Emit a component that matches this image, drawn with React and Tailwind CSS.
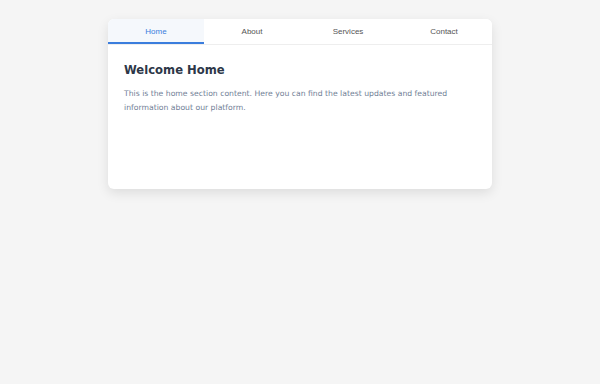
import React, { useState } from "react";

const tabs = [
  {
    id: "home",
    label: "Home",
    title: "Welcome Home",
    body: "This is the home section content. Here you can find the latest updates and featured information about our platform.",
  },
  {
    id: "about",
    label: "About",
    title: "About Us",
    body: "Learn more about our team, our mission and the story behind the platform.",
  },
  {
    id: "services",
    label: "Services",
    title: "Our Services",
    body: "Explore the services we offer and find the one that fits your needs.",
  },
  {
    id: "contact",
    label: "Contact",
    title: "Get in Touch",
    body: "Have a question? Reach out to us and we will get back to you shortly.",
  },
];

const App = () => {
  const [active, setActive] = useState("home");
  const current = tabs.find((t) => t.id === active);

  return (
    <div className="min-h-[384px] bg-[#f5f5f5] pt-[19px]">
      <div className="mx-auto w-[384px] bg-white rounded-md shadow-[0_4px_12px_rgba(0,0,0,0.1)] overflow-hidden">
        {/* Tabs */}
        <div className="flex border-b border-[#eeeeee]">
          {tabs.map((tab) => (
            <button
              key={tab.id}
              onClick={() => setActive(tab.id)}
              className={
                "flex-1 h-[25px] pt-[2px] text-[8px] font-['Liberation_Sans',Arial,sans-serif] border-b-2 " +
                (active === tab.id
                  ? "bg-[#f5f8fc] text-[#3b7ddd] border-[#3b7ddd]"
                  : "bg-white text-[#555555] border-transparent")
              }
            >
              {tab.label}
            </button>
          ))}
        </div>

        {/* Content */}
        <div className="h-[144px] px-4 pt-[17px] font-['DejaVu_Sans',Verdana,sans-serif]">
          <h2 className="text-[11.6px] font-bold text-[#2d3748] leading-[16px]">
            {current.title}
          </h2>
          <p className="mt-[9px] text-[7.7px] leading-[14px] text-[#718096]">
            {current.body}
          </p>
        </div>
      </div>
    </div>
  );
};

export default App;
